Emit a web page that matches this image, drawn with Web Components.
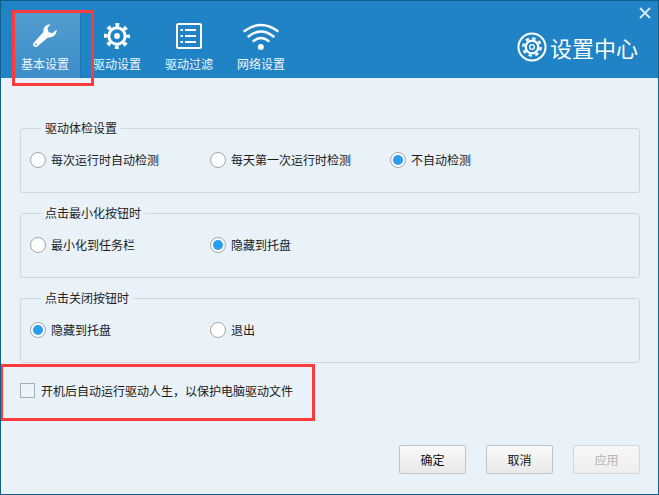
<!DOCTYPE html>
<html>
<head>
<meta charset="utf-8">
<title>设置中心</title>
<style>
  html, body { margin: 0; padding: 0; background: #e9f1f9; }
  body { font: 12px "Noto Sans CJK SC", "Liberation Sans", sans-serif; color: #1a1a1a; }
  svg { display: block; }
</style>
</head>
<body>
<settings-window>
  <nav-tab slot="tabs" label="基本设置" active>
    <svg width="24" height="24" viewBox="0 0 24 24"><path fill="#fff" d="M17.500.3C13.200.2 10 3.500 10.400 7.900L1 18.600a2.400 2.400 0 0 0 3.600 3.600L14.900 13.400C19.800 14.300 24 10.500 23.700 5.600L19.800 9 15.500 8.200 14.500 4Z"/><circle cx="2.900" cy="20.400" r=".9" fill="#4a98cd"/></svg>
  </nav-tab>
  <nav-tab slot="tabs" label="驱动设置">
    <svg width="28" height="28" viewBox="0 0 28 28" fill="none" stroke="#fff"><circle cx="14" cy="14" r="8.200" stroke-width="3"/><circle cx="14" cy="14" r="11.200" stroke-width="3.600" stroke-dasharray="3.800 4.996" stroke-dashoffset="1.900"/><circle cx="14" cy="14" r="2.900" fill="#fff" stroke="none"/></svg>
  </nav-tab>
  <nav-tab slot="tabs" label="驱动过滤">
    <svg width="28" height="28" viewBox="0 0 28 28" fill="none" stroke="#fff" stroke-width="2"><rect x="2" y="2" width="24" height="24" rx="1.500"/><path d="M10 8h11M10 14h11M10 20h11"/><path d="M5.500 8h2.500M5.500 14h2.500M5.500 20h2.500"/></svg>
  </nav-tab>
  <nav-tab slot="tabs" label="网络设置">
    <svg width="36" height="28" viewBox="0 0 36 28" fill="none" stroke="#fff" stroke-width="2.400" stroke-linecap="round"><path d="M1.500 9Q18-3 34.500 9"/><path d="M5.500 14.500Q18 4.500 30.500 14.500"/><path d="M10.500 19Q18 13 25.500 19"/><circle cx="17.800" cy="25" r="3" fill="#fff" stroke="none"/></svg>
  </nav-tab>

  <svg slot="brand-icon" width="30" height="30" viewBox="0 0 31 31" fill="none" stroke="#fff"><circle cx="15.500" cy="15.500" r="14" stroke-width="2.100"/><circle cx="15.500" cy="15.500" r="6.500" stroke-width="2.400"/><circle cx="15.500" cy="15.500" r="9" stroke-width="2.400" stroke-dasharray="3.500 3.570"/><circle cx="15.500" cy="15.500" r="2.400" stroke-width="1.400"/></svg>
  <span slot="brand">设置中心</span>

  <option-group label="驱动体检设置">
    <option-radio>每次运行时自动检测</option-radio>
    <option-radio>每天第一次运行时检测</option-radio>
    <option-radio checked>不自动检测</option-radio>
  </option-group>
  <option-group label="点击最小化按钮时">
    <option-radio>最小化到任务栏</option-radio>
    <option-radio checked>隐藏到托盘</option-radio>
  </option-group>
  <option-group label="点击关闭按钮时">
    <option-radio checked>隐藏到托盘</option-radio>
    <option-radio>退出</option-radio>
  </option-group>

  <option-check>开机后自动运行驱动人生，以保护电脑驱动文件</option-check>

  <dialog-button slot="actions">确定</dialog-button>
  <dialog-button slot="actions">取消</dialog-button>
  <dialog-button slot="actions" disabled>应用</dialog-button>
</settings-window>

<script>
const windowTemplate = `
  <style>
    :host {
      display: flex;
      flex-direction: column;
      position: relative;
      box-sizing: border-box;
      width: 659px;
      height: 495px;
      border: 1px solid #0f5f8b;
      background: #e9f1f9;
      overflow: hidden;
    }
    header {
      display: flex;
      align-items: flex-end;
      height: 77px;
      padding-left: 8px;
      background: #2083c5;
      color: #fff;
    }
    .brand {
      display: flex;
      align-items: center;
      gap: 3px;
      margin-left: auto;
      margin-right: 20px;
      margin-bottom: 16px;
      font-size: 22px;
      line-height: 30px;
    }
    .close {
      position: absolute;
      top: 6px;
      right: 7px;
    }
    main {
      flex: 1;
      display: flex;
      flex-direction: column;
      gap: 13px;
      padding: 43px 18px 20px 19px;
    }
    footer {
      display: flex;
      justify-content: flex-end;
      gap: 20px;
      margin-top: auto;
    }
    .mark {
      position: absolute;
      box-sizing: border-box;
      border: 3px solid #fd3a3c;
    }
    .mark.tab { left: 11px; top: 9px; width: 82px; height: 76px; }
    .mark.row { left: -1px; top: 363px; width: 315px; height: 57px; }
  </style>
  <header>
    <slot name="tabs"></slot>
    <div class="brand"><slot name="brand-icon"></slot><slot name="brand"></slot></div>
  </header>
  <svg class="close" width="12" height="12" viewBox="0 0 12 12" stroke="#dbeaf5" stroke-width="1.800"><path d="M1 1l10 10M11 1L1 11"/></svg>
  <main>
    <slot></slot>
    <footer><slot name="actions"></slot></footer>
  </main>
  <div class="mark tab"></div>
  <div class="mark row"></div>
`;

class SettingsWindow extends HTMLElement {
  constructor() {
    super();
    this.attachShadow({ mode: "open" }).innerHTML = windowTemplate;
  }
}

class NavTab extends HTMLElement {
  constructor() {
    super();
    this.attachShadow({ mode: "open" }).innerHTML = `
      <style>
        :host {
          display: flex;
          flex-direction: column;
          align-items: center;
          box-sizing: border-box;
          width: 72px;
          height: 65px;
          color: #eef6fc;
          line-height: 16px;
        }
        :host([active]) {
          background: linear-gradient(#529dd0, #3c8dc9) right / 67px 100% no-repeat;
          box-shadow: inset -1px 0 0 #1b76b4;
        }
        .icon {
          display: flex;
          align-items: center;
          justify-content: center;
          height: 28px;
          margin-top: 9px;
        }
        .label { margin-top: 6px; }
      </style>
      <div class="icon"><slot></slot></div>
      <div class="label"></div>
    `;
  }
  connectedCallback() {
    this.shadowRoot.querySelector(".label").textContent = this.getAttribute("label");
  }
}

class OptionGroup extends HTMLElement {
  constructor() {
    super();
    this.attachShadow({ mode: "open" }).innerHTML = `
      <style>
        :host { display: block; }
        fieldset {
          box-sizing: border-box;
          height: 72px;
          margin: 0;
          padding: 17px 0 0 9px;
          border: 1px solid #cfd6de;
          border-radius: 3px;
        }
        legend {
          margin-left: 11px;
          padding: 0 4px;
          line-height: 14px;
          color: #222;
        }
        .row {
          display: grid;
          grid-template-columns: repeat(3, 180px);
        }
      </style>
      <fieldset>
        <legend></legend>
        <div class="row"><slot></slot></div>
      </fieldset>
    `;
  }
  connectedCallback() {
    this.shadowRoot.querySelector("legend").textContent = this.getAttribute("label");
  }
}

class OptionRadio extends HTMLElement {
  constructor() {
    super();
    this.attachShadow({ mode: "open" }).innerHTML = `
      <style>
        :host {
          display: flex;
          align-items: center;
          gap: 5px;
          height: 16px;
          line-height: 16px;
        }
        .dot {
          display: flex;
          align-items: center;
          justify-content: center;
          box-sizing: border-box;
          width: 16px;
          height: 16px;
          border: 1px solid #a6a6a6;
          border-radius: 50%;
          background: #fff;
        }
        :host([checked]) .dot::after {
          content: "";
          width: 10px;
          height: 10px;
          border-radius: 50%;
          background: #2a9dec;
        }
      </style>
      <span class="dot"></span><slot></slot>
    `;
  }
}

class OptionCheck extends HTMLElement {
  constructor() {
    super();
    this.attachShadow({ mode: "open" }).innerHTML = `
      <style>
        :host {
          display: flex;
          align-items: center;
          gap: 6px;
          height: 15px;
          margin-top: 7px;
          line-height: 15px;
        }
        .box {
          box-sizing: border-box;
          width: 15px;
          height: 15px;
          border: 1px solid #a2afbd;
          background: #eef3f9;
        }
      </style>
      <span class="box"></span><slot></slot>
    `;
  }
}

class DialogButton extends HTMLElement {
  constructor() {
    super();
    this.attachShadow({ mode: "open" }).innerHTML = `
      <style>
        :host {
          display: flex;
          align-items: center;
          justify-content: center;
          box-sizing: border-box;
          width: 67px;
          height: 29px;
          border: 1px solid #c4c4c4;
          border-radius: 2px;
          background: linear-gradient(#f9f9f9, #e9e9e9);
          color: #111;
        }
        :host([disabled]) {
          border-color: #d6d6d6;
          background: linear-gradient(#f7f7f7, #eeeeee);
          color: #b4b4b4;
        }
      </style>
      <slot></slot>
    `;
  }
}

customElements.define("settings-window", SettingsWindow);
customElements.define("nav-tab", NavTab);
customElements.define("option-group", OptionGroup);
customElements.define("option-radio", OptionRadio);
customElements.define("option-check", OptionCheck);
customElements.define("dialog-button", DialogButton);
</script>
</body>
</html>
